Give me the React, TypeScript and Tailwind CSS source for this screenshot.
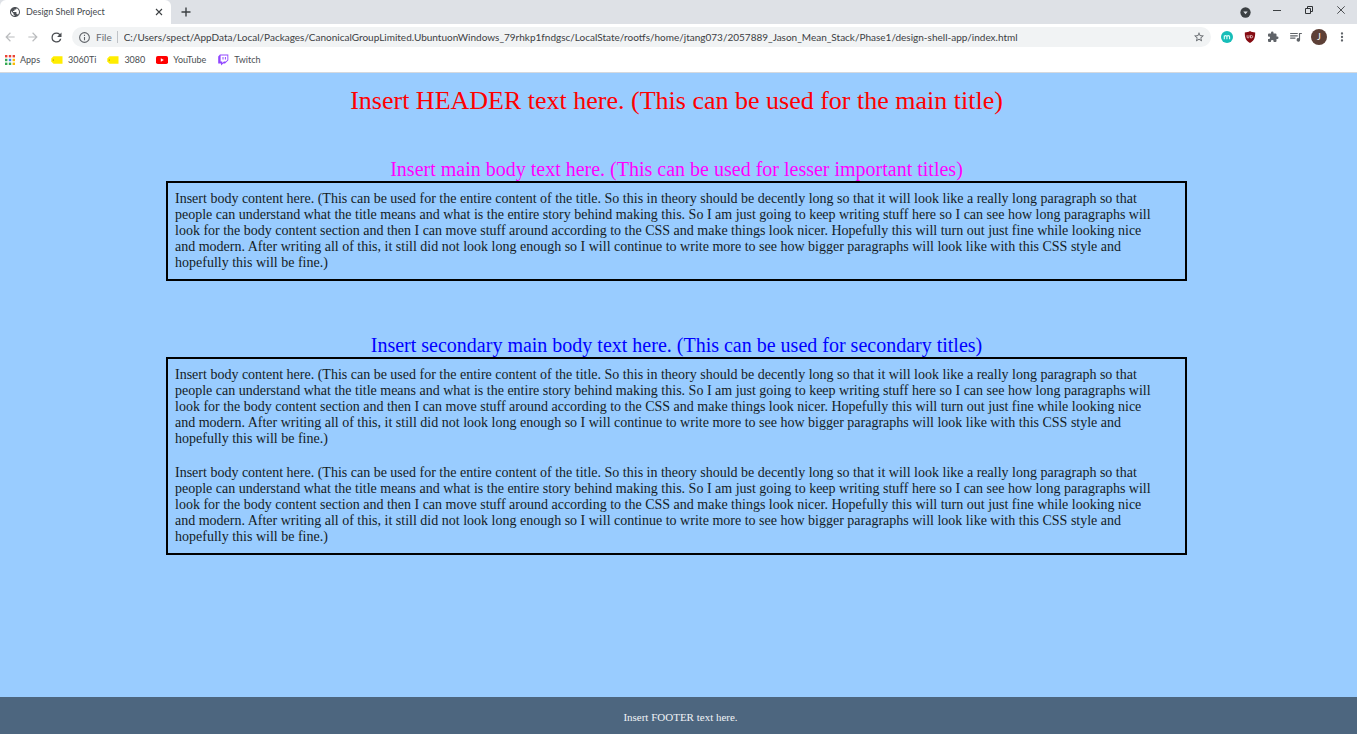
import React from "react";

const bodyText =
  "Insert body content here. (This can be used for the entire content of the title. So this in theory should be decently long so that it will look like a really long paragraph so that people can understand what the title means and what is the entire story behind making this. So I am just going to keep writing stuff here so I can see how long paragraphs will look for the body content section and then I can move stuff around according to the CSS and make things look nicer. Hopefully this will turn out just fine while looking nice and modern. After writing all of this, it still did not look long enough so I will continue to write more to see how bigger paragraphs will look like with this CSS style and hopefully this will be fine.)";

const pageUrl =
  "C:/Users/spect/AppData/Local/Packages/CanonicalGroupLimited.UbuntuonWindows_79rhkp1fndgsc/LocalState/rootfs/home/jtang073/2057889_Jason_Mean_Stack/Phase1/design-shell-app/index.html";

function IconButton({ label, children }: { label: string; children: React.ReactNode }) {
  return (
    <button type="button" aria-label={label} className="flex h-4 w-4 shrink-0 items-center justify-center">
      {children}
    </button>
  );
}

function Glyph({ d, className }: { d: string; className: string }) {
  return (
    <svg viewBox="0 0 24 24" fill="currentColor" className={className} aria-hidden="true">
      <path d={d} />
    </svg>
  );
}

function TabStrip() {
  return (
    <div className="flex h-6 items-stretch bg-[#dee1e6]">
      <div className="flex w-[171px] items-center rounded-t-md bg-white pl-[9px] pr-1 text-[#45494d]">
        <Glyph
          className="h-3 w-3 text-[#4d5156]"
          d="M12 2C6.48 2 2 6.48 2 12s4.48 10 10 10 10-4.48 10-10S17.52 2 12 2zm-1 17.93c-3.95-.49-7-3.85-7-7.93 0-.62.08-1.21.21-1.79L9 15v1c0 1.1.9 2 2 2v1.93zm6.9-2.54c-.26-.81-1-1.39-1.9-1.39h-1v-3c0-.55-.45-1-1-1H8v-2h2c.55 0 1-.45 1-1V7h2c1.1 0 2-.9 2-2v-.41c2.93 1.19 5 4.06 5 7.41 0 2.08-.8 3.97-2.1 5.39z"
        />
        <span className="ml-[5px] flex-1 text-[9px]">Design Shell Project</span>
        <IconButton label="Close tab">
          <svg viewBox="0 0 8 8" className="h-2 w-2" stroke="#3c4043" strokeWidth="1.1" aria-hidden="true">
            <path d="M1 1l6 6M7 1L1 7" />
          </svg>
        </IconButton>
      </div>
      <div className="ml-[7px] flex items-center">
        <IconButton label="New tab">
          <svg viewBox="0 0 10 10" className="h-[10px] w-[10px]" stroke="#3c4043" strokeWidth="1.4" aria-hidden="true">
            <path d="M5 .5v9M.5 5h9" />
          </svg>
        </IconButton>
      </div>
      <div className="ml-auto flex items-start gap-4 pr-2 pt-[2px]">
        <IconButton label="Search tabs">
          <svg viewBox="0 0 12 12" className="mt-1 h-[11px] w-[11px]" aria-hidden="true">
            <circle cx="6" cy="6" r="5.6" fill="#3c4043" />
            <path d="M3.6 4.8h4.8L6 7.8z" fill="#dee1e6" />
          </svg>
        </IconButton>
        <IconButton label="Minimize">
          <svg viewBox="0 0 8 8" className="h-2 w-2" stroke="#3c4043" aria-hidden="true">
            <path d="M0 4.500h8" />
          </svg>
        </IconButton>
        <IconButton label="Restore">
          <svg viewBox="0 0 8 8" className="h-2 w-2" stroke="#303336" fill="none" aria-hidden="true">
            <path d="M.5 2.500h5v5h-5zM2.500 2.500v-2h5v5h-2" />
          </svg>
        </IconButton>
        <IconButton label="Close window">
          <svg viewBox="0 0 8 8" className="h-2 w-2" stroke="#3c4043" strokeWidth=".9" aria-hidden="true">
            <path d="M.3.3l7.400 7.400M7.700.3L.3 7.700" />
          </svg>
        </IconButton>
      </div>
    </div>
  );
}

function Toolbar() {
  return (
    <div className="flex h-[26px] items-center pl-[2px] pr-[7px]">
      <div className="flex gap-[7px]">
        <IconButton label="Back">
          <Glyph className="h-[14px] w-[14px] text-[#babcbe]" d="M20 11H7.830l5.590-5.590L12 4l-8 8 8 8 1.410-1.410L7.830 13H20v-2z" />
        </IconButton>
        <IconButton label="Forward">
          <Glyph className="h-[14px] w-[14px] text-[#babcbe]" d="M12 4l-1.410 1.410L16.170 11H4v2h12.170l-5.580 5.590L12 20l8-8z" />
        </IconButton>
        <IconButton label="Reload">
          <Glyph
            className="h-[15px] w-[15px] text-[#4a4d51]"
            d="M17.650 6.350A7.958 7.958 0 0 0 12 4a8 8 0 1 0 7.730 10h-2.080A6 6 0 1 1 12 6c1.660 0 3.140.690 4.220 1.780L13 11h7V4l-2.350 2.350z"
          />
        </IconButton>
      </div>
      <div className="ml-2 flex h-5 min-w-0 flex-1 items-center rounded-full bg-[#f1f3f4] pl-[6px] pr-1">
        <Glyph
          className="h-[13px] w-[13px] shrink-0 text-[#5f6368]"
          d="M11 7h2v2h-2zm0 4h2v6h-2zm1-9a10 10 0 1 0 0 20 10 10 0 0 0 0-20zm0 18a8 8 0 1 1 0-16 8 8 0 0 1 0 16z"
        />
        <span className="ml-[5px] text-[10px] text-[#6a6e73]">File</span>
        <span className="ml-[5px] h-3 w-px bg-[#c0c3c7]" />
        <input
          type="text"
          aria-label="Address"
          defaultValue={pageUrl}
          className="ml-[6px] min-w-0 flex-1 bg-transparent text-[10px] text-[#3c4043] outline-none"
        />
        <IconButton label="Bookmark this page">
          <Glyph
            className="h-3 w-3 text-[#5f6368]"
            d="M22 9.240l-7.190-.620L12 2 9.190 8.630 2 9.240l5.460 4.730L5.820 21 12 17.270 18.180 21l-1.630-7.030L22 9.240zM12 15.400l-3.760 2.270 1-4.280-3.320-2.880 4.380-.380L12 6.100l1.710 4.040 4.380.380-3.320 2.880 1 4.280L12 15.400z"
          />
        </IconButton>
      </div>
      <div className="ml-2 flex items-center gap-[7px]">
        <IconButton label="Extension M">
          <svg viewBox="0 0 12 12" className="h-3 w-3" aria-hidden="true">
            <circle cx="6" cy="6" r="6" fill="#16bdb8" />
            <path d="M3.300 8.300V4.500m0 1.200c0-1.500 2.600-1.500 2.600 0v2.600m0-2.600c0-1.500 2.700-1.500 2.700 0v2.600" fill="none" stroke="#e4fffa" strokeWidth="1.100" />
          </svg>
        </IconButton>
        <IconButton label="Content blocker">
          <svg viewBox="0 0 12 12" className="h-3 w-3" aria-hidden="true">
            <path d="M6 0c1.500 1 3.200 1.400 5.200 1.500 0 5-.8 8-5.200 10.500C1.600 9.500.8 6.500.8 1.500 2.800 1.400 4.500 1 6 0z" fill="#850b12" />
            <path d="M3.100 4.200v1.900c0 1.200 1.900 1.200 1.900 0V4.200M6.500 4.400v2.500h.8c1.800 0 1.800-2.500 0-2.500z" fill="none" stroke="#f0d8d9" strokeWidth=".8" />
          </svg>
        </IconButton>
        <IconButton label="Extensions">
          <Glyph
            className="h-3 w-3 text-[#5f6368]"
            d="M20.500 11H19V7a2 2 0 0 0-2-2h-4V3.500a2.500 2.500 0 0 0-5 0V5H4a2 2 0 0 0-2 2v3.800h1.500a2.700 2.700 0 0 1 0 5.400H2V20a2 2 0 0 0 2 2h3.800v-1.500a2.700 2.700 0 0 1 5.400 0V22H17a2 2 0 0 0 2-2v-4h1.500a2.500 2.500 0 0 0 0-5z"
          />
        </IconButton>
        <IconButton label="Media controls">
          <Glyph
            className="h-[14px] w-[14px] text-[#5f6368]"
            d="M2 5h13v2H2zm0 4h13v2H2zm0 4h9v2H2zM17 5h5v2h-3v10a3 3 0 1 1-2-2.820z"
          />
        </IconButton>
        <button type="button" aria-label="Profile" className="flex h-4 w-4 items-center justify-center rounded-full bg-[#5d4037] text-[9px] text-white">
          J
        </button>
        <IconButton label="Menu">
          <Glyph
            className="h-[14px] w-[14px] text-[#5f6368]"
            d="M12 8a2 2 0 1 0 0-4 2 2 0 0 0 0 4zm0 2a2 2 0 1 0 0 4 2 2 0 0 0 0-4zm0 6a2 2 0 1 0 0 4 2 2 0 0 0 0-4z"
          />
        </IconButton>
      </div>
    </div>
  );
}

function TagIcon() {
  return (
    <svg viewBox="0 0 12 8" className="h-2 w-3" aria-hidden="true">
      <path d="M2.500.3H11.500v7.400H2.500L.3 5.600V2.400z" fill="#ffed00" />
      <circle cx="2.300" cy="4" r=".6" fill="#7a7210" />
    </svg>
  );
}

function AppsIcon() {
  const colors = ["#ea4335", "#ea4335", "#ea4335", "#34a853", "#4285f4", "#fbbc05", "#34a853", "#34a853", "#fbbc05"];
  return (
    <svg viewBox="0 0 10 10" className="h-[10px] w-[10px]" aria-hidden="true">
      {colors.map((color, i) => (
        <rect key={i} x={(i % 3) * 3.8} y={Math.floor(i / 3) * 3.8} width="2.400" height="2.400" fill={color} />
      ))}
    </svg>
  );
}

function Bookmark({ icon, label }: { icon: React.ReactNode; label: string }) {
  return (
    <a href="#" className="flex items-center gap-[5px]">
      {icon}
      <span>{label}</span>
    </a>
  );
}

function BookmarksBar() {
  return (
    <nav aria-label="Bookmarks" className="flex h-[23px] items-center gap-[11px] border-b border-[#d5d9de] pb-[3px] pl-[5px] text-[9px] text-[#4a4e52]">
      <Bookmark icon={<AppsIcon />} label="Apps" />
      <Bookmark icon={<TagIcon />} label="3060Ti" />
      <Bookmark icon={<TagIcon />} label="3080" />
      <Bookmark
        label="YouTube"
        icon={
          <svg viewBox="0 0 12 8" className="h-2 w-3" aria-hidden="true">
            <rect width="12" height="8" rx="1.800" fill="#ff0000" />
            <path d="M4.800 2.300v3.400L7.800 4z" fill="#fff" />
          </svg>
        }
      />
      <Bookmark
        label="Twitch"
        icon={
          <svg viewBox="0 0 12 12" className="h-3 w-3" aria-hidden="true">
            <path d="M3 .5h8.300v5.700L8 9.400H6.200L4 11.500V9.400H1.200V2.400z" fill="#9146ff" />
            <path d="M3.600 1.400h6.800v4.500L8.800 7.500H6.900L5.300 9V7.500H3.600z" fill="#fff" />
            <path d="M6 3v2.500M8.400 3v2.500" stroke="#9146ff" />
          </svg>
        }
      />
    </nav>
  );
}

function ContentBox({ children }: { children: React.ReactNode }) {
  return (
    <div className="space-y-[18px] border-2 border-black py-2 pl-[7px] pr-5 text-[14px] leading-4 text-[#141c26]">
      {children}
    </div>
  );
}

export default function App() {
  return (
    <div className="flex min-h-screen flex-col bg-[#99ccff]">
      <header className="bg-white font-['Lato',sans-serif]">
        <TabStrip />
        <Toolbar />
        <BookmarksBar />
      </header>
      <main className="flex-1 pb-16 pl-[166px] pr-[170px] pt-3 font-['Liberation_Serif',serif]">
        <h1 className="text-center text-[26px] leading-8 text-[#ff0000]">
          Insert HEADER text here. (This can be used for the main title)
        </h1>
        <section className="mt-10">
          <h2 className="text-center text-[20px] leading-6 text-[#ff00ff]">
            Insert main body text here. (This can be used for lesser important titles)
          </h2>
          <ContentBox>
            <p>{bodyText}</p>
          </ContentBox>
        </section>
        <section className="mt-[52px]">
          <h2 className="text-center text-[20px] leading-6 text-[#0000ff]">
            Insert secondary main body text here. (This can be used for secondary titles)
          </h2>
          <ContentBox>
            <p>{bodyText}</p>
            <p>{bodyText}</p>
          </ContentBox>
        </section>
      </main>
      <footer className="flex h-[37px] items-center justify-center bg-[#4d667f] pl-1 pt-1 font-['Liberation_Serif',serif] text-[11px] text-[#f0f3f6]">
        Insert FOOTER text here.
      </footer>
    </div>
  );
}
